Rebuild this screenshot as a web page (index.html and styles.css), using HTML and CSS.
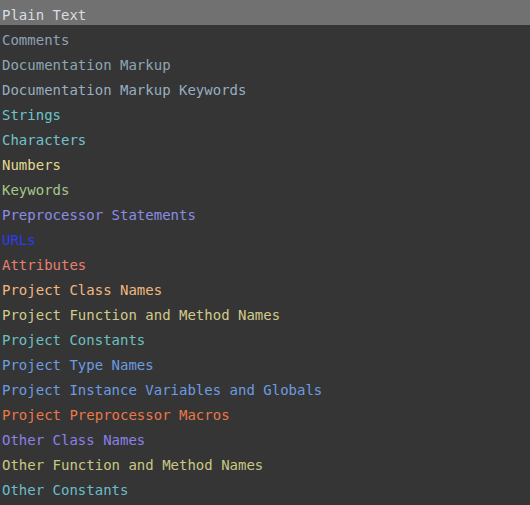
FILE: index.html
```html
<!DOCTYPE html>
<html>
<head>
<meta charset="utf-8">
<link rel="stylesheet" href="styles.css">
</head>
<body>
<ul class="list">
  <li class="row selected c-plain">Plain Text</li>
  <li class="row c-comments">Comments</li>
  <li class="row c-doc">Documentation Markup</li>
  <li class="row c-dockw">Documentation Markup Keywords</li>
  <li class="row c-strings">Strings</li>
  <li class="row c-chars">Characters</li>
  <li class="row c-numbers">Numbers</li>
  <li class="row c-keywords">Keywords</li>
  <li class="row c-preproc">Preprocessor Statements</li>
  <li class="row c-urls">URLs</li>
  <li class="row c-attrs">Attributes</li>
  <li class="row c-pclass">Project Class Names</li>
  <li class="row c-pfunc">Project Function and Method Names</li>
  <li class="row c-pconst">Project Constants</li>
  <li class="row c-ptype">Project Type Names</li>
  <li class="row c-pvars">Project Instance Variables and Globals</li>
  <li class="row c-pmacro">Project Preprocessor Macros</li>
  <li class="row c-oclass">Other Class Names</li>
  <li class="row c-ofunc">Other Function and Method Names</li>
  <li class="row c-oconst">Other Constants</li>
</ul>
</body>
</html>
```
FILE: styles.css
```css
html, body {
  margin: 0;
  padding: 0;
  background: #353535;
}
.list {
  list-style: none;
  margin: 0;
  padding: 0;
  font-family: "DejaVu Sans Mono", "Liberation Mono", monospace;
  font-size: 14px;
}
.row {
  box-sizing: border-box;
  height: 25px;
  padding: 6px 0 0 2px;
  line-height: 19px;
  white-space: nowrap;
}
.selected { background: #717171; }
.c-plain { color: #d8dde2; }
.c-comments { color: #8ea2b6; }
.c-doc { color: #8ea6b4; }
.c-dockw { color: #98aec0; }
.c-strings { color: #6cc4cc; }
.c-chars { color: #74c0cc; }
.c-numbers { color: #e2da92; }
.c-keywords { color: #a6c88a; }
.c-preproc { color: #8c8ce6; }
.c-urls { color: #2b3cf2; }
.c-attrs { color: #e8806e; }
.c-pclass { color: #f2b882; }
.c-pfunc { color: #d2ca8a; }
.c-pconst { color: #6cc0c2; }
.c-ptype { color: #6c9ce2; }
.c-pvars { color: #6c9ce2; }
.c-pmacro { color: #ea7848; }
.c-oclass { color: #8c80ea; }
.c-ofunc { color: #cac882; }
.c-oconst { color: #6cbccc; }
```
